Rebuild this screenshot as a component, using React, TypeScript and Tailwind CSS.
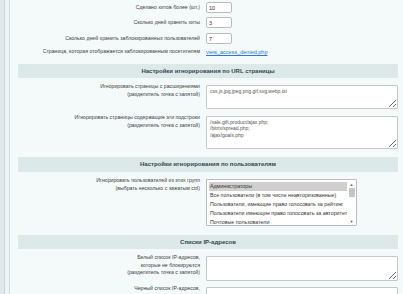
import React from "react";

const font = { fontFamily: '"Liberation Sans", Arial, sans-serif' };

function Label({ lines }: { lines: string[] }) {
  return (
    <div className="-mt-[2px] text-right text-[5.2px] leading-[7.5px] text-[#404040]">
      {lines.map((l) => (
        <div key={l}>{l}</div>
      ))}
    </div>
  );
}

function Header({ title, className }: { title: string; className: string }) {
  return (
    <div
      className={`flex h-[14px] items-center justify-center bg-[#dde8e9] text-[6px] font-bold text-[#34474c] ${className}`}
    >
      {title}
    </div>
  );
}

function Area({ value, h }: { value: string; h: string }) {
  return (
    <textarea
      readOnly
      value={value}
      className={`block w-[192px] ${h} resize-y rounded-[1px] border border-[#c3c7c8] bg-white px-[3px] py-[2px] text-[5px] leading-[6.3px] text-[#555] outline-none`}
    />
  );
}

const groups = [
  "Администраторы",
  "Все пользователи (в том числе неавторизованные)",
  "Пользователи, имеющие право голосовать за рейтинг",
  "Пользователи имеющие право голосовать за авторитет",
  "Почтовые пользователи",
];

const inputCls =
  "h-[11px] w-[26px] rounded-[2px] border border-[#b8bcbd] bg-white px-[2px] text-[5.5px] text-[#333] outline-none";
const rowLabel = "flex h-[11px] items-center justify-end text-[5.2px] text-[#404040]";

export default function App() {
  return (
    <div style={font} className="flex h-[294px] w-[403px] overflow-hidden bg-[#f4fafa]">
      {/* left frame */}
      <div className="w-[4px] bg-[#e1e9eb]" />
      <div className="w-[1px] bg-[#c9d5d8]" />
      <div className="w-[4px] bg-[#edf4f5]" />
      <div className="w-[1px] bg-[#d3dee0]" />

      <div className="flex flex-1 flex-col pl-[8px] pt-[2px]">
        <div className="w-[380px]">
          <div className="grid grid-cols-[182px_192px] gap-x-[6px]">
            <div className={rowLabel}>Сделано хитов более (шт.)</div>
            <input readOnly value="10" className={inputCls} />
          </div>
          <div className="mt-[4px] grid grid-cols-[182px_192px] gap-x-[6px]">
            <div className={rowLabel}>Сколько дней хранить хиты</div>
            <input readOnly value="3" className={inputCls} />
          </div>
          <div className="mt-[5px] grid grid-cols-[182px_192px] gap-x-[6px]">
            <div className={rowLabel}>Сколько дней хранить заблокированных пользователей</div>
            <input readOnly value="7" className={inputCls} />
          </div>
          <div className="mt-[4px] grid grid-cols-[182px_192px] gap-x-[6px]">
            <div className="flex h-[8px] items-center justify-end text-[5.2px] text-[#404040]">
              Страница, которая отображается заблокированным посетителям
            </div>
            <a className="flex h-[8px] items-center text-[5.5px] text-[#2b78d0] underline">
              view_access_denied.php
            </a>
          </div>

          <Header title="Настройки игнорирования по URL страницы" className="mt-[8px]" />

          <div className="mt-[7px] grid grid-cols-[182px_192px] gap-x-[6px]">
            <Label lines={["Игнорировать страницы с расширениями", "(разделитель точка с запятой)"]} />
            <Area value="css,js,jpg,jpeg,png,gif,svg,webp,txt" h="h-[24px]" />
          </div>
          <div className="mt-[7px] grid grid-cols-[182px_192px] gap-x-[6px]">
            <Label lines={["Игнорировать страницы содержащие эти подстроки", "(разделитель точка с запятой)"]} />
            <Area
              value={"/sale.gift.product/ajax.php;\n/bitrix/spread.php;\n/ajax/goals.php"}
              h="h-[33px]"
            />
          </div>

          <Header title="Настройки игнорирования по пользователям" className="mt-[8px] h-[15px]" />

          <div className="mt-[7px] grid grid-cols-[182px_192px] gap-x-[6px]">
            <Label lines={["Игнорировать пользователей из этих групп", "(выбрать несколько с зажатым ctrl)"]} />
            <div className="flex h-[47px] w-[151px] rounded-[1px] border border-[#b8bcbd] bg-white">
              <div className="flex-1 pl-[2px] pt-[2px]">
                {groups.map((g, i) => (
                  <div
                    key={g}
                    className={`h-[9px] truncate pl-[1px] text-[5.3px] leading-[9px] text-[#333] ${
                      i === 0 ? "bg-[#cfcfcf]" : ""
                    }`}
                  >
                    {g}
                  </div>
                ))}
              </div>
              <div className="flex w-[9px] flex-col items-center">
                <div className="flex h-[7px] items-end text-[4px] leading-none text-[#666]">▲</div>
                <div className="mt-[1px] h-[9px] w-[6px] bg-[#c4c4c4]" />
                <div className="flex-1" />
                <div className="mb-[1px] text-[4px] leading-none text-[#666]">▼</div>
              </div>
            </div>
          </div>

          <Header title="Списки IP-адресов" className="mt-[9px]" />

          <div className="mt-[7px] grid grid-cols-[182px_192px] gap-x-[6px]">
            <Label lines={["Белый список IP-адресов,", "которые не блокируются", "(разделитель точка с запятой)"]} />
            <Area value="" h="h-[25px]" />
          </div>
          <div className="mt-[6px] grid grid-cols-[182px_192px] gap-x-[6px]">
            <Label lines={["Черный список IP-адресов,", "которые блокируются", "(разделитель точка с запятой)"]} />
            <Area value="" h="h-[25px]" />
          </div>
        </div>
      </div>
    </div>
  );
}
